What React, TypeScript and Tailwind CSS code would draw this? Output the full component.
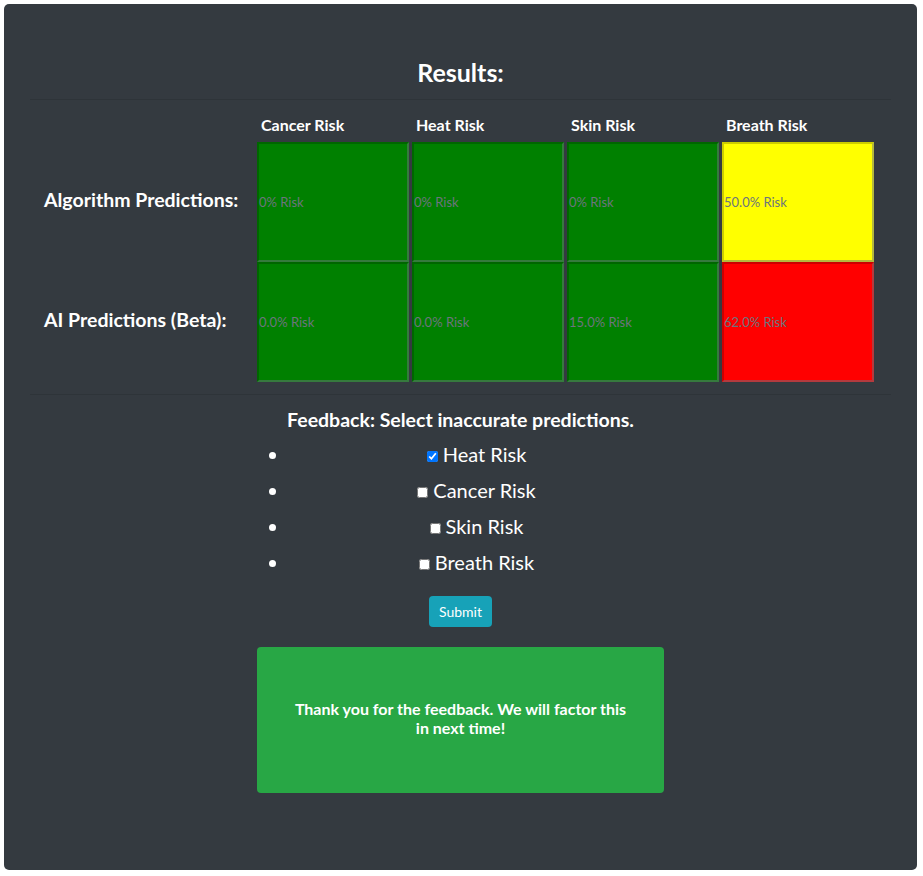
import { useState } from "react";

type Cell = { value: string; color: string };

const columns = ["Cancer Risk", "Heat Risk", "Skin Risk", "Breath Risk"];

const rows: { label: string; cells: Cell[] }[] = [
  {
    label: "Algorithm Predictions:",
    cells: [
      { value: "0% Risk", color: "bg-[#008000]" },
      { value: "0% Risk", color: "bg-[#008000]" },
      { value: "0% Risk", color: "bg-[#008000]" },
      { value: "50.0% Risk", color: "bg-[#ffff00]" },
    ],
  },
  {
    label: "AI Predictions (Beta):",
    cells: [
      { value: "0.0% Risk", color: "bg-[#008000]" },
      { value: "0.0% Risk", color: "bg-[#008000]" },
      { value: "15.0% Risk", color: "bg-[#008000]" },
      { value: "62.0% Risk", color: "bg-[#ff0000]" },
    ],
  },
];

const App = () => {
  const [checked, setChecked] = useState<Record<string, boolean>>({
    "Heat Risk": true,
    "Cancer Risk": false,
    "Skin Risk": false,
    "Breath Risk": false,
  });

  const feedbackItems = ["Heat Risk", "Cancer Risk", "Skin Risk", "Breath Risk"];

  return (
    <div className="min-h-screen bg-white pt-1 pl-1 font-['Lato','Noto_Sans',sans-serif]">
      <div className="w-[913px] h-[866px] bg-[#343a40] rounded-[5px] px-[26px] pt-[53px] text-white">
        {/* Title */}
        <h2 className="text-center text-[25px] font-bold leading-[30px]">Results:</h2>
        <div className="mt-[12px] h-px bg-black/10"></div>

        {/* Results table */}
        <div className="grid grid-cols-[224px_repeat(4,152px)] gap-x-[3px]">
          <div></div>
          {columns.map((c) => (
            <div key={c} className="pt-[15px] pb-[7px] pl-1 text-[16px] font-bold leading-5">
              {c}
            </div>
          ))}
          {rows.map((row) => (
            <>
              <div
                key={row.label}
                className="h-[120px] flex items-center pl-[14px] pb-1 text-[19.5px] font-bold"
              >
                {row.label}
              </div>
              {row.cells.map((cell, i) => (
                <div
                  key={row.label + i}
                  className={`h-[120px] flex items-center pt-[2px] ${cell.color} border-2 border-t-black/20 border-l-black/20 border-b-[#6c757d]/50 border-r-[#6c757d]/50 text-[13px] text-[#6c757d]`}
                >
                  {cell.value}
                </div>
              ))}
            </>
          ))}
        </div>
        <div className="mt-3 h-px bg-black/10"></div>

        {/* Feedback */}
        <div className="w-[407px] mx-auto">
          <h3 className="mt-[13px] mb-1 text-center text-[19.5px] font-bold leading-6 whitespace-nowrap -mx-10">
            Feedback: Select inaccurate predictions.
          </h3>
          <ul className="list-disc pl-8 text-[20px]">
            {feedbackItems.map((item) => (
              <li key={item} className="h-9 leading-9 text-center">
                <label>
                  <input
                    type="checkbox"
                    checked={checked[item]}
                    onChange={() => setChecked({ ...checked, [item]: !checked[item] })}
                    className="w-[11px] h-[11px] m-0 mr-[5px] align-middle accent-[#0075ff]"
                  />
                  {item}
                </label>
              </li>
            ))}
          </ul>
          <div className="mt-4 flex justify-center">
            <button className="h-[31px] px-[10px] rounded bg-[#17a2b8] text-[14px] text-white">
              Submit
            </button>
          </div>
          <div className="mt-5 h-[146px] rounded bg-[#28a745] flex items-center justify-center text-center text-[16px] font-bold leading-[19px] px-8">
            <p className="-mt-1">
              Thank you for the feedback. We will factor this
              <br />
              in next time!
            </p>
          </div>
        </div>
      </div>
    </div>
  );
};

export default App;
